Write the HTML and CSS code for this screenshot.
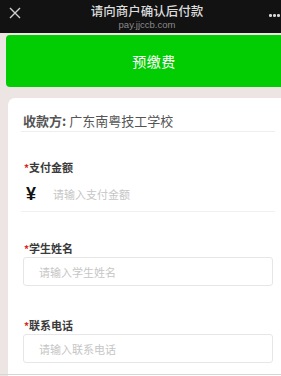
FILE: index.html
```html
<!DOCTYPE html>
<html lang="zh">
<head>
<meta charset="utf-8">
<link rel="stylesheet" href="styles.css">
</head>
<body>
<div class="page">
  <header class="topbar">
    <div class="close">
      <svg width="12" height="12" viewBox="0 0 12 12"><path d="M1 1L11 11M11 1L1 11" stroke="#d0d0d0" stroke-width="1.4" fill="none"/></svg>
    </div>
    <div class="title">
      <div class="title-main">请向商户确认后付款</div>
      <div class="title-url">pay.jjccb.com</div>
    </div>
    <div class="more"><span></span><span></span><span></span></div>
  </header>
  <main class="main">
    <div class="banner">预缴费</div>
    <section class="card">
      <div class="payee"><b>收款方:</b> 广东南粤技工学校</div>
      <div class="label label-amount"><i>*</i>支付金额</div>
      <div class="amount">
        <span class="yen">¥</span>
        <span class="ph">请输入支付金额</span>
      </div>
      <div class="label label-name"><i>*</i>学生姓名</div>
      <div class="input"><span class="ph">请输入学生姓名</span></div>
      <div class="label label-phone"><i>*</i>联系电话</div>
      <div class="input"><span class="ph">请输入联系电话</span></div>
    </section>
  </main>
  <div class="bottom-line"></div>
</div>
</body>
</html>
```
FILE: styles.css
```css
html, body {
  margin: 0;
  padding: 0;
  background: #ede5e3;
  overflow: hidden;
  width: 281px;
  height: 376px;
}
.page {
  width: 281px;
  height: 376px;
  overflow: hidden;
  font-family: "Noto Sans CJK SC", "Noto Sans", sans-serif;
}
.topbar {
  width: 294px;
  height: 33px;
  background: #121212;
  display: grid;
  grid-template-columns: 30px 1fr 30px;
  align-items: start;
}
.close {
  padding: 7px 0 0 9px;
  height: 12px;
}
.close svg { display: block; }
.title {
  text-align: center;
  padding-top: 2px;
}
.title-main {
  color: #dcdcdc;
  font-size: 12.5px;
  line-height: 17px;
  font-weight: 500;
}
.title-url {
  color: #8a8a8a;
  font-size: 9.5px;
  line-height: 12px;
  font-family: "Liberation Sans", sans-serif;
}
.more {
  display: flex;
  gap: 1.5px;
  padding: 14px 0 0 5px;
}
.more span {
  width: 2.5px;
  height: 2.5px;
  border-radius: 50%;
  background: #d8d8d8;
}
.main {
  padding-top: 2px;
}
.banner {
  margin-left: 6px;
  width: 296px;
  height: 52px;
  background: #02cc02;
  border-radius: 4px;
  color: #fff;
  font-size: 14px;
  line-height: 52px;
  text-align: center;
  letter-spacing: 0.5px;
}
.card {
  margin: 11px 0 0 8px;
  width: 280px;
  height: 278px;
  background: #fff;
  border-radius: 7px 7px 0 0;
  padding: 14px 13px 0;
  box-sizing: border-box;
}
.payee {
  font-size: 13px;
  line-height: 18px;
  color: #555;
  padding: 0 0 1px 2px;
  border-bottom: 1px solid #eeeeee;
}
.payee b {
  font-weight: 700;
}
.label {
  font-size: 11px;
  line-height: 15px;
  font-weight: 700;
  color: #3a3a3a;
  padding-left: 3px;
}
.label i {
  font-style: normal;
  color: #e02020;
  font-size: 10px;
}
.label-amount { margin-top: 28px; }
.amount {
  display: flex;
  align-items: center;
  padding: 10px 0 8px 5px;
  border-bottom: 1px solid #f0f0f0;
  line-height: 18px;
}
.yen {
  font-family: "Liberation Sans", sans-serif;
  font-weight: 700;
  font-size: 18px;
  color: #111;
  width: 27px;
}
.ph {
  font-size: 11px;
  color: #c6c6c6;
}
.label-name { margin-top: 29px; }
.label-phone { margin-top: 32px; }
.input {
  margin: 1px 0 0 2px;
  width: 250px;
  height: 29px;
  box-sizing: border-box;
  border: 1px solid #e6e6e6;
  border-radius: 3px;
  padding-left: 15px;
  display: flex;
  align-items: center;
}
.bottom-line {
  position: fixed;
  left: 0;
  bottom: 1px;
  width: 281px;
  height: 1px;
  background: #d6d6d6;
}
```
